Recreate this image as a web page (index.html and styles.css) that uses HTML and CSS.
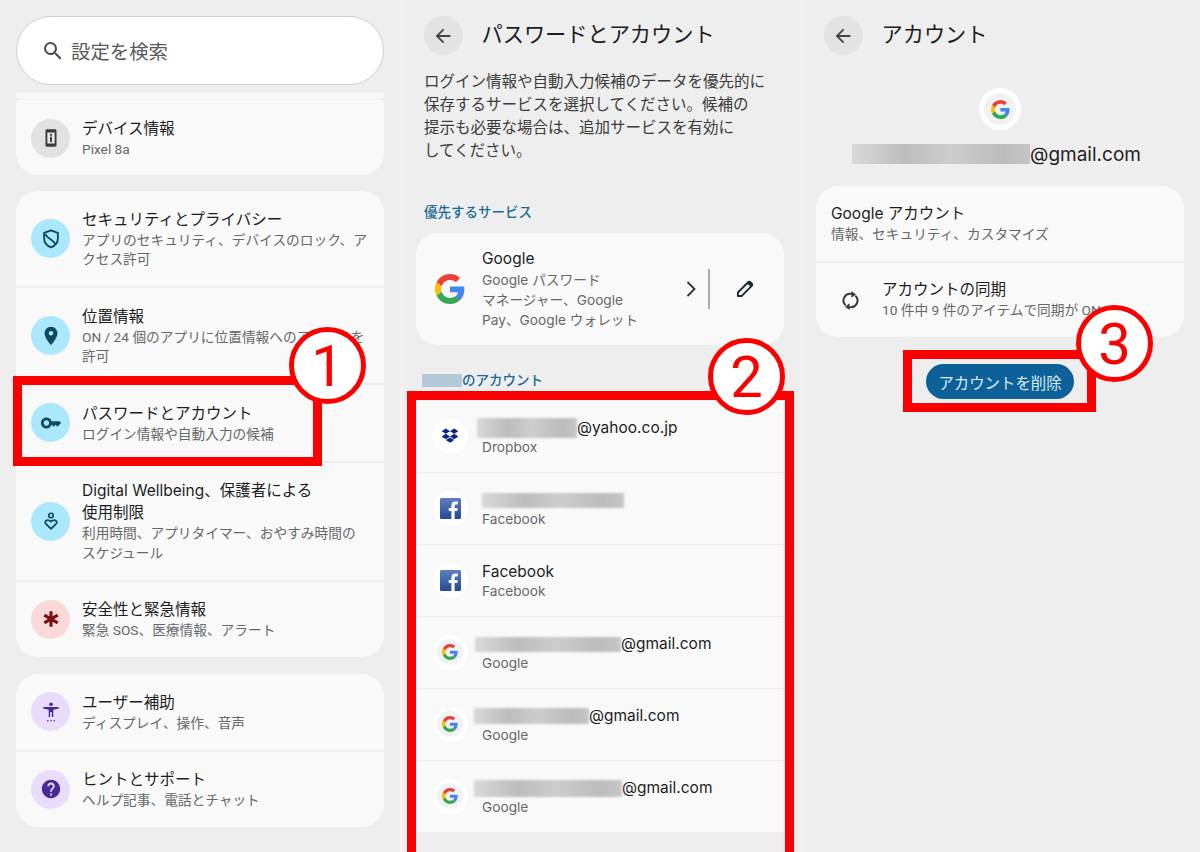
FILE: index.html
```html
<!DOCTYPE html>
<html lang="ja">
<head>
<meta charset="utf-8">
<title>パスワードとアカウント</title>
<link rel="stylesheet" href="styles.css">
</head>
<body>
<svg class="defs" width="0" height="0" aria-hidden="true">
  <symbol id="g" viewBox="0 0 48 48">
    <path fill="#EA4335" d="M24 9.5c3.54 0 6.71 1.22 9.21 3.6l6.85-6.85C35.9 2.38 30.47 0 24 0 14.62 0 6.51 5.38 2.56 13.22l7.98 6.19C12.43 13.72 17.74 9.5 24 9.5z"/>
    <path fill="#4285F4" d="M46.98 24.55c0-1.57-.15-3.09-.38-4.55H24v9.02h12.94c-.58 2.96-2.26 5.48-4.78 7.18l7.73 6c4.51-4.18 7.09-10.36 7.09-17.65z"/>
    <path fill="#FBBC05" d="M10.53 28.59c-.48-1.45-.76-2.99-.76-4.59s.27-3.14.76-4.59l-7.98-6.19C.92 16.46 0 20.12 0 24c0 3.88.92 7.54 2.56 10.78l7.97-6.19z"/>
    <path fill="#34A853" d="M24 48c6.48 0 11.93-2.13 15.89-5.81l-7.73-6c-2.15 1.45-4.92 2.3-8.16 2.3-6.26 0-11.57-4.22-13.47-9.91l-7.98 6.19C6.51 42.62 14.62 48 24 48z"/>
  </symbol>
  <symbol id="fb" viewBox="0 0 21 21">
    <defs><linearGradient id="fbg" x1="0" y1="0" x2="0" y2="1"><stop offset="0" stop-color="#5b7fc0"/><stop offset="1" stop-color="#254a94"/></linearGradient></defs>
    <rect width="21" height="21" rx="1.5" fill="url(#fbg)"/>
    <path fill="#fff" d="M14.6 21v-8h2.7l.4-3.1h-3.1V8c0-.9.3-1.5 1.6-1.5h1.6V3.7c-.3 0-1.3-.1-2.4-.1-2.4 0-4 1.4-4 4.1v2.2H8.7V13h2.7v8z"/>
  </symbol>
  <symbol id="back" viewBox="0 0 24 24">
    <path fill="currentColor" d="M20 11H7.83l5.59-5.59L12 4l-8 8 8 8 1.41-1.41L7.83 13H20z"/>
  </symbol>
</svg>

<main class="screens">
  <section class="panel">
    <div class="search">
      <svg class="search-icon" viewBox="0 0 24 24"><path fill="#4a4a4a" d="M15.5 14h-.79l-.28-.27A6.47 6.47 0 0 0 16 9.5 6.5 6.5 0 1 0 9.5 16c1.61 0 3.09-.59 4.23-1.57l.27.28v.79l5 4.99L20.49 19l-4.99-5zm-6 0C7.01 14 5 11.99 5 9.5S7.01 5 9.5 5 14 7.01 14 9.5 11.99 14 9.5 14z"/></svg>
      <span class="search-text">設定を検索</span>
    </div>
    <div class="peek"></div>
    <div class="group group-tight">
      <div class="row">
        <span class="badge badge-grey">
          <svg viewBox="0 0 24 24"><rect x="6" y="2.5" width="12" height="19" rx="1.6" fill="#3b3b3b"/><rect x="8" y="6" width="8" height="12" fill="#e4e4e4"/><rect x="11" y="7.5" width="2" height="2" fill="#3b3b3b"/><rect x="11" y="10.5" width="2" height="6" fill="#3b3b3b"/></svg>
        </span>
        <div class="copy"><div class="title">デバイス情報</div><div class="sub">Pixel 8a</div></div>
      </div>
    </div>
    <div class="group">
      <div class="row">
        <span class="badge badge-blue">
          <svg viewBox="0 0 24 24"><path fill="none" stroke="#0d4a5c" stroke-width="2" stroke-linejoin="round" d="M12 2.500l7.500 2.800v5.800c0 4.700-3 8.200-7.500 10-4.500-1.800-7.500-5.300-7.500-10V5.300z"/><path fill="none" stroke="#0d4a5c" stroke-width="2" d="M6 6.500c1 3.500 3.800 4.500 6 6 2 1.400 4 3 5 6"/></svg>
        </span>
        <div class="copy"><div class="title">セキュリティとプライバシー</div><div class="sub">アプリのセキュリティ、デバイスのロック、ア<br>クセス許可</div></div>
      </div>
      <div class="row">
        <span class="badge badge-blue">
          <svg viewBox="0 0 24 24"><path fill="#0d4a5c" d="M12 2C8.130 2 5 5.130 5 9c0 5.250 7 13 7 13s7-7.750 7-13c0-3.870-3.130-7-7-7zm0 9.500a2.500 2.500 0 1 1 0-5 2.500 2.500 0 0 1 0 5z"/></svg>
        </span>
        <div class="copy"><div class="title">位置情報</div><div class="sub">ON / 24 個のアプリに位置情報へのアクセスを<br>許可</div></div>
      </div>
      <div class="row">
        <span class="badge badge-blue">
          <svg viewBox="0 0 24 24"><path fill="#0d4a5c" d="M21 10h-8.350A5.990 5.990 0 0 0 7 6c-3.310 0-6 2.690-6 6s2.690 6 6 6a5.990 5.990 0 0 0 5.650-4H13l2 2 2-2 2 2 4-4.040L21 10zM7 15c-1.650 0-3-1.350-3-3s1.350-3 3-3 3 1.350 3 3-1.350 3-3 3z"/></svg>
        </span>
        <div class="copy"><div class="title">パスワードとアカウント</div><div class="sub">ログイン情報や自動入力の候補</div></div>
      </div>
      <div class="row">
        <span class="badge badge-blue">
          <svg viewBox="0 0 24 24"><circle cx="12" cy="6" r="2.500" fill="none" stroke="#0d4a5c" stroke-width="1.800"/><path fill="none" stroke="#0d4a5c" stroke-width="2" stroke-linejoin="round" d="M12 20.500l-5.500-5.300c-1.700-1.800-.4-4.200 1.700-4.200 1.600 0 3 .9 3.800 1.700.8-.8 2.200-1.700 3.800-1.700 2.100 0 3.400 2.400 1.700 4.200z"/></svg>
        </span>
        <div class="copy"><div class="title">Digital Wellbeing、保護者による<br>使用制限</div><div class="sub">利用時間、アプリタイマー、おやすみ時間の<br>スケジュール</div></div>
      </div>
      <div class="row">
        <span class="badge badge-red">
          <svg viewBox="0 0 24 24"><path stroke="#7c0f0f" stroke-width="3.400" d="M12 3.500v17M4.700 7.800l14.600 8.400M19.300 7.800L4.700 16.200"/></svg>
        </span>
        <div class="copy"><div class="title">安全性と緊急情報</div><div class="sub">緊急 SOS、医療情報、アラート</div></div>
      </div>
    </div>
    <div class="group group-last">
      <div class="row">
        <span class="badge badge-violet">
          <svg viewBox="0 0 24 24"><circle cx="12" cy="3.500" r="2" fill="#4a2a9a"/><path fill="#4a2a9a" d="M3.500 6.500h17v1.800l-6 1.200v8h-1.600V12h-1.800v5.500H9.500v-8l-6-1.200z"/><circle cx="8.500" cy="21.500" r=".9" fill="#4a2a9a"/><circle cx="12" cy="21.500" r=".9" fill="#4a2a9a"/><circle cx="15.500" cy="21.500" r=".9" fill="#4a2a9a"/></svg>
        </span>
        <div class="copy"><div class="title">ユーザー補助</div><div class="sub">ディスプレイ、操作、音声</div></div>
      </div>
      <div class="row">
        <span class="badge badge-violet">
          <svg viewBox="0 0 24 24"><path fill="#4a2a9a" d="M12 2C6.480 2 2 6.480 2 12s4.480 10 10 10 10-4.480 10-10S17.520 2 12 2zm1 17h-2v-2h2v2zm2.070-7.750l-.9.920C13.450 12.900 13 13.500 13 15h-2v-.5c0-1.100.45-2.100 1.170-2.830l1.240-1.260c.37-.36.59-.86.59-1.410 0-1.100-.9-2-2-2s-2 .9-2 2H8c0-2.210 1.790-4 4-4s4 1.790 4 4c0 .88-.36 1.680-.93 2.250z"/></svg>
        </span>
        <div class="copy"><div class="title">ヒントとサポート</div><div class="sub">ヘルプ記事、電話とチャット</div></div>
      </div>
    </div>
    <div class="mark mark-one"></div>
    <div class="num num-one">1</div>
  </section>

  <section class="panel panel-sub">
    <header class="head">
      <span class="back"><svg><use href="#back"/></svg></span>
      <h1 class="head-title">パスワードとアカウント</h1>
    </header>
    <p class="intro">ログイン情報や自動入力候補のデータを優先的に<br>保存するサービスを選択してください。候補の<br>提示も必要な場合は、追加サービスを有効に<br>してください。</p>
    <div class="label label-first">優先するサービス</div>
    <div class="group group-flat">
      <div class="row row-pref">
        <svg class="pref-logo"><use href="#g"/></svg>
        <div class="copy copy-wide"><div class="title">Google</div><div class="sub sub-loose">Google パスワード<br>マネージャー、Google<br>Pay、Google ウォレット</div></div>
        <svg class="chev" viewBox="0 0 12 18"><path fill="none" stroke="#333" stroke-width="1.800" d="M2.500 2L9.500 9l-7 7"/></svg>
        <span class="divider"></span>
        <svg class="pencil" viewBox="0 0 24 24"><path fill="none" stroke="#1f2a33" stroke-width="2.400" stroke-linejoin="round" d="M3.500 20.500v-4.300L15.800 3.900a1.800 1.800 0 0 1 2.500 0l1.800 1.800a1.800 1.800 0 0 1 0 2.500L7.800 20.500z"/><path fill="#1f2a33" d="M14.500 5.500l4-2.500 3 3-2 4z"/></svg>
      </div>
    </div>
    <div class="label label-second"><span class="hide-label"></span>のアカウント</div>
    <div class="accounts">
      <div class="acct">
        <span class="avatar"><svg viewBox="0 0 24 24" class="dbx"><path fill="#0d2481" d="M7 3l5 3.200-5 3.200-5-3.200zM17 3l5 3.200-5 3.200-5-3.200zM2 12.600l5-3.200 5 3.200-5 3.200zM22 12.600l-5-3.200-5 3.200 5 3.200zM7 16.900l5-3.200 5 3.200-5 3.200z"/></svg></span>
        <div class="copy"><div class="title"><span class="blur blur-yahoo"></span>@yahoo.co.jp</div><div class="sub">Dropbox</div></div>
      </div>
      <div class="acct">
        <span class="avatar"><svg class="fb"><use href="#fb"/></svg></span>
        <div class="copy"><div class="title"><span class="blur blur-fb"></span></div><div class="sub">Facebook</div></div>
      </div>
      <div class="acct">
        <span class="avatar"><svg class="fb"><use href="#fb"/></svg></span>
        <div class="copy"><div class="title">Facebook</div><div class="sub">Facebook</div></div>
      </div>
      <div class="acct">
        <span class="avatar"><span class="g-ring"><svg><use href="#g"/></svg></span></span>
        <div class="copy"><div class="title"><span class="blur blur-g1"></span>@gmail.com</div><div class="sub">Google</div></div>
      </div>
      <div class="acct">
        <span class="avatar"><span class="g-ring"><svg><use href="#g"/></svg></span></span>
        <div class="copy"><div class="title"><span class="blur blur-g2"></span>@gmail.com</div><div class="sub">Google</div></div>
      </div>
      <div class="acct">
        <span class="avatar"><span class="g-ring"><svg><use href="#g"/></svg></span></span>
        <div class="copy"><div class="title"><span class="blur blur-g3"></span>@gmail.com</div><div class="sub">Google</div></div>
      </div>
    </div>
    <div class="mark mark-two"></div>
    <div class="num num-two">2</div>
  </section>

  <section class="panel panel-sub">
    <header class="head">
      <span class="back"><svg><use href="#back"/></svg></span>
      <h1 class="head-title">アカウント</h1>
    </header>
    <div class="identity">
      <span class="avatar avatar-big"><span class="g-ring g-ring-big"><svg><use href="#g"/></svg></span></span>
      <div class="identity-mail"><span class="blur blur-id"></span>@gmail.com</div>
    </div>
    <div class="group group-flat">
      <div class="row row-plain">
        <div class="copy"><div class="title">Google アカウント</div><div class="sub">情報、セキュリティ、カスタマイズ</div></div>
      </div>
      <div class="row row-sync">
        <svg class="sync" viewBox="0 0 24 24"><path fill="none" stroke="#3a3a3a" stroke-width="2.300" d="M6.500 17.500A7.500 7.500 0 0 1 13.500 4.700M17.500 6.500A7.500 7.500 0 0 1 10.500 19.300"/><path fill="#3a3a3a" d="M13 1.200l5.300 3.800L13 8.800zM11 15.200l-5.300 3.800L11 22.800z"/></svg>
        <div class="copy"><div class="title">アカウントの同期</div><div class="sub">10 件中 9 件のアイテムで同期が ON</div></div>
      </div>
    </div>
    <div class="actions"><button class="remove" type="button">アカウントを削除</button></div>
    <div class="mark mark-three"></div>
    <div class="num num-three">3</div>
  </section>
</main>
</body>
</html>
```
FILE: styles.css
```css
* { box-sizing: border-box; }
html, body { margin: 0; height: 100%; }
body {
  width: 1200px;
  height: 852px;
  overflow: hidden;
  background: #eeeeee;
  color: #1d1d1f;
  font-family: Roboto, "Noto Sans CJK JP", sans-serif;
}
.defs { position: absolute; }
.screens { display: flex; height: 852px; }
.panel {
  position: relative;
  width: 400px;
  height: 852px;
  padding: 16px 16px 0;
  overflow: hidden;
  flex: none;
}
.panel-sub { box-shadow: inset 3px 0 0 #f3f3f3; }

/* search */
.search {
  display: flex;
  align-items: center;
  height: 69px;
  padding-left: 24px;
  background: #fff;
  border: 1px solid #cfcfcf;
  border-radius: 35px;
}
.search-icon { width: 24px; height: 24px; flex: none; }
.search-text { margin-left: 6px; font-size: 19.400px; color: #5a5a5a; }
.peek { height: 6px; margin: 8px 0 0; background: #f8f8f8; }

/* cards */
.group {
  display: flex;
  flex-direction: column;
  gap: 2px;
  margin-top: 16px;
  border-radius: 22px;
  overflow: hidden;
}
.group-tight { margin-top: 1px; border-radius: 4px 4px 22px 22px; }
.group-tight .row { padding-top: 18px; padding-bottom: 15.500px; }
.group-flat { margin-top: 0; }
.group-last { margin-top: 17px; }
.row {
  display: flex;
  align-items: center;
  padding: 17.500px 15px 16.500px;
  background: #f9f9f9;
}
.row .badge { margin-top: -1px; }
.badge {
  display: flex;
  align-items: center;
  justify-content: center;
  width: 39px;
  height: 39px;
  border-radius: 50%;
  flex: none;
}
.badge svg { width: 22px; height: 22px; }
.badge-grey { background: #e2e2e2; }
.badge-blue { background: #ace8fd; }
.badge-red { background: #fcd9d9; }
.badge-violet { background: #eadcfd; }
.copy { margin-left: 12px; min-width: 0; }
.title {
  font-family: Inter, "Noto Sans CJK JP", sans-serif;
  font-size: 15.500px;
  line-height: 22px;
  color: #1d1d1f;
  white-space: nowrap;
}
.sub { font-size: 13.700px; line-height: 19.500px; color: #65686b; white-space: nowrap; }
.sub-loose { line-height: 20px; font-family: Inter, "Noto Sans CJK JP", sans-serif; }

/* sub page header */
.head { display: flex; align-items: center; gap: 19px; margin-left: 7.500px; height: 39px; }
.back {
  display: flex;
  align-items: center;
  justify-content: center;
  width: 39px;
  height: 39px;
  border-radius: 50%;
  background: #e3e3e3;
  color: #444;
}
.back svg { width: 22px; height: 22px; }
.head-title { margin: -2px 0 0; font-size: 21.200px; font-weight: 400; line-height: 38px; color: #1d1d1f; }
.intro { margin: 16px 0 0 8px; font-size: 15.500px; line-height: 23px; color: #3b3b3b; white-space: nowrap; }
.label { margin-left: 8px; font-size: 13.500px; line-height: 20px; color: #1a6a94; font-weight: 500; }
.label-first { margin-top: 39px; margin-bottom: 11px; }
.label-second { margin-top: 25px; margin-bottom: 11px; display: flex; align-items: center; }
.hide-label { width: 40px; height: 13px; margin-left: -2px; background: #b3c9d7; }

/* preferred service */
.row-pref { padding: 15px 29px 15px 19px; height: 112px; }
.pref-logo { width: 30px; height: 30px; flex: none; }
.copy-wide { margin-left: 17px; flex: 1; }
.chev { width: 12px; height: 18px; flex: none; margin-left: 2px; }
.divider { width: 2px; height: 40px; margin: 0 25px 0 11px; background: #ababab; flex: none; }
.pencil { width: 20px; height: 20px; flex: none; }

/* accounts */
.accounts { display: flex; flex-direction: column; gap: 1px; background: #eeeeee; }
.acct {
  display: flex;
  align-items: center;
  height: 71px;
  padding-left: 16.500px;
  background: #f9f9f9;
}
.acct .avatar { margin-top: -1px; }
.acct .title { line-height: 20px; height: 20px; margin-bottom: -1.500px; display: flex; align-items: center; }
.acct .sub { line-height: 20px; font-size: 13.700px; font-family: Inter, "Noto Sans CJK JP", sans-serif; }
.avatar {
  display: flex;
  align-items: center;
  justify-content: center;
  width: 35px;
  height: 35px;
  border-radius: 50%;
  background: #fff;
  flex: none;
}
.acct .copy { margin-left: 14.500px; padding-top: 1.500px; }
.dbx { width: 20px; height: 20px; }
.fb { width: 21px; height: 21px; }
.g-ring {
  display: flex;
  align-items: center;
  justify-content: center;
  width: 26px;
  height: 26px;
  border-radius: 50%;
  background: #f2f2f2;
}
.g-ring svg { width: 16px; height: 16px; }

/* redactions */
.blur {
  display: block;
  flex: none;
  background: linear-gradient(90deg, #d9d9d9, #bdbdbd 30%, #cdcdcd 55%, #bcbcbc 85%, #c6c6c6);
  filter: blur(.8px);
}
.blur-yahoo { width: 100px; height: 20px; margin-left: -5px; }
.blur-fb { width: 142px; height: 15px; }
.blur-g1 { width: 146px; height: 15px; margin-left: -7px; }
.blur-g2 { width: 115px; height: 16px; margin-left: -8px; }
.blur-g3 { width: 148px; height: 17px; margin-left: -8px; }
.blur-id { width: 178px; height: 20px; filter: none; }

/* account detail */
.identity { display: flex; flex-direction: column; align-items: center; margin-top: 33px; margin-bottom: 20px; }
.avatar-big { width: 42px; height: 42px; }
.g-ring-big { width: 32px; height: 32px; }
.g-ring-big svg { width: 19px; height: 19px; }
.identity-mail {
  display: flex;
  align-items: center;
  margin: 12px 7px 0 0;
  height: 24px;
  font-family: Inter, "Noto Sans CJK JP", sans-serif;
  font-size: 19px;
  color: #1d1d1f;
}
.row-plain { padding: 17px 15px; height: 75px; }
.row-plain .copy { margin-left: 0; }
.row-sync { padding: 17px 24px; height: 74px; }
.sync { width: 21px; height: 21px; flex: none; }
.row-sync .copy { margin-left: 21px; }
.actions { display: flex; justify-content: center; margin-top: 27px; }
.remove {
  width: 148px;
  height: 35px;
  padding: 0;
  border: 0;
  border-radius: 18px;
  background: #0b6198;
  color: #dcebf3;
  font: 400 15.400px Roboto, "Noto Sans CJK JP", sans-serif;
}

/* annotations laid over the screenshots */
.mark { position: absolute; border: 9.500px solid #fb0000; }
.mark-one { left: 13px; top: 376px; width: 309px; height: 90px; }
.mark-two { left: 7px; top: 391px; width: 387px; height: 500px; }
.mark-three { left: 103px; top: 350px; width: 193px; height: 62px; }
.num {
  position: absolute;
  display: flex;
  align-items: center;
  justify-content: center;
  width: 77px;
  height: 77px;
  border: 5px solid #fb0000;
  border-radius: 50%;
  background: #fff;
  color: #fb0000;
  font-size: 58px;
  font-weight: 400;
  line-height: 1;
}
.num-one { left: 289px; top: 327px; }
.num-two { left: 308px; top: 338px; }
.num-three { left: 276px; top: 305px; }
```
